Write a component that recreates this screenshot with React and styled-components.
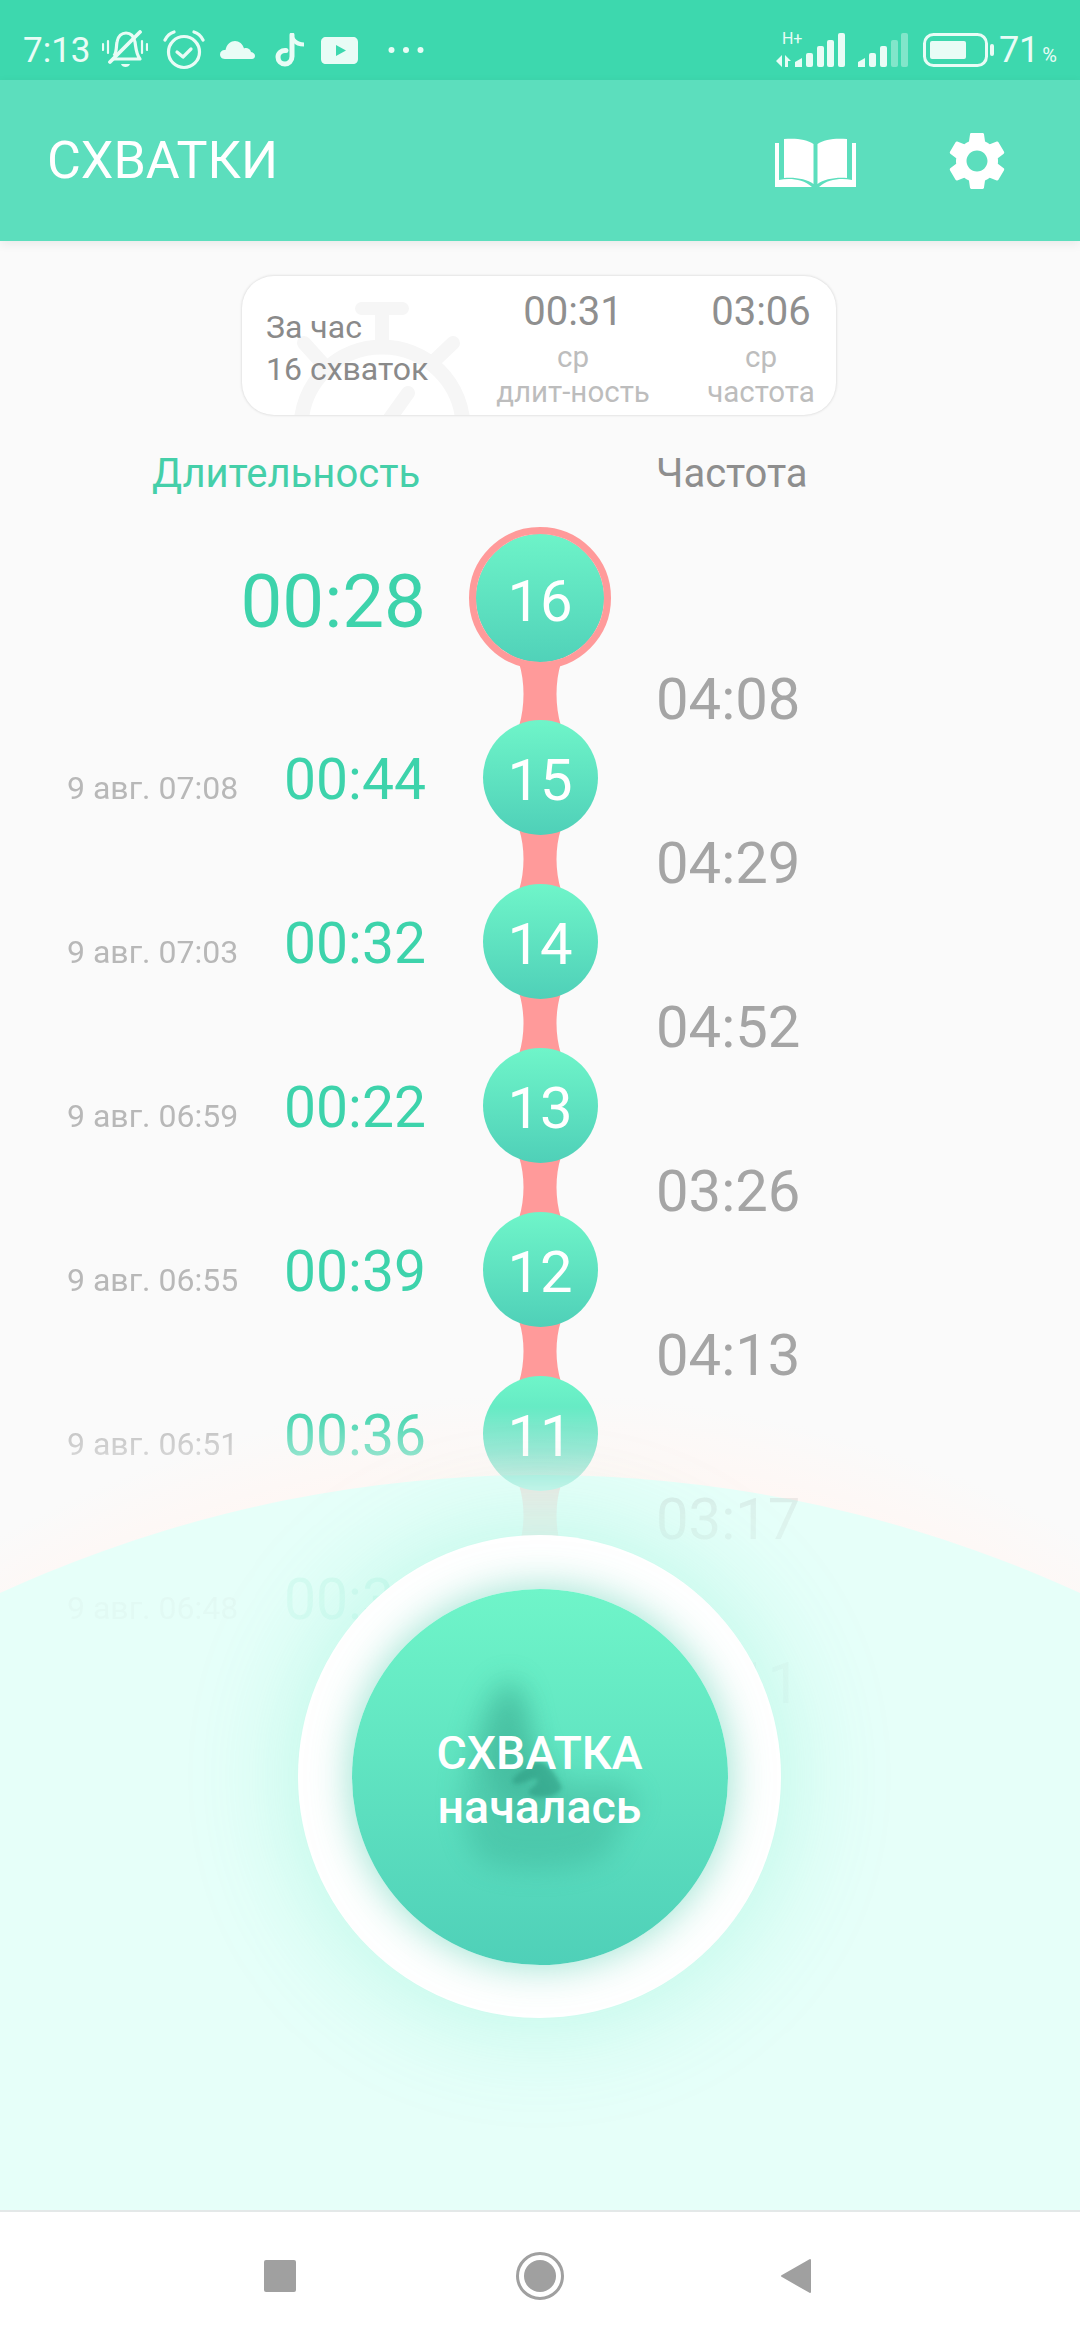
import { createGlobalStyle, styled } from "styled-components";
import { MdSettings } from "react-icons/md";

const durations = [
  { id: 16, time: "00:28" },
  { id: 15, time: "00:44", date: "9 авг. 07:08" },
  { id: 14, time: "00:32", date: "9 авг. 07:03" },
  { id: 13, time: "00:22", date: "9 авг. 06:59" },
  { id: 12, time: "00:39", date: "9 авг. 06:55" },
  { id: 11, time: "00:36", date: "9 авг. 06:51" },
  { id: 10, time: "00:35", date: "9 авг. 06:48" },
];
const frequencies = ["04:08", "04:29", "04:52", "03:26", "04:13", "03:17", "03:11"];

export default function App() {
  return (
    <Screen>
      <GlobalStyle />
      <StatusBar>
        <Clock>7:13</Clock>
        <Glyph $ml={12} width="46" height="40" viewBox="0 0 46 40">
          <path d="M12 26 C15 22 14 17 15 12 C16 6 20 3 24 3 C29 3 32 7 33 12 C34 18 34 24 38 29 H10" fill="none" stroke="currentColor" strokeWidth="3.2" strokeLinejoin="round" />
          <path d="M8 32 L38 2" stroke="currentColor" strokeWidth="3.8" strokeLinecap="round" />
          <path d="M19 34 H28 C27 38 20 38 19 34 Z" fill="currentColor" />
          <path d="M1 14 V20 M6 11 V23 M40 11 V23 M45 14 V20" stroke="currentColor" strokeWidth="2.2" strokeLinecap="round" />
        </Glyph>
        <Glyph $ml={15} width="42" height="40" viewBox="0 0 42 40">
          <circle cx="21" cy="22" r="15.5" fill="none" stroke="currentColor" strokeWidth="3.2" />
          <path d="M14 22 L20 27 L28 19" fill="none" stroke="currentColor" strokeWidth="3.2" strokeLinecap="round" strokeLinejoin="round" />
          <path d="M2 10 C4 6 7 3 11 2 M40 10 C38 6 35 3 31 2" fill="none" stroke="currentColor" strokeWidth="3.2" strokeLinecap="round" />
        </Glyph>
        <Glyph $ml={15} width="35" height="20" viewBox="0 0 35 20">
          <path d="M5 19 C1 19 0 16 0 14.5 C0 11 3 9.5 5.5 10 C6.5 4 11 1 15 1 C19 1 23 4 24 8.5 C26 7.5 30 8 31 12 C33.5 12.5 35 14 35 16 C35 18 33.5 19 32 19 Z" fill="currentColor" />
        </Glyph>
        <Glyph $ml={20} width="29" height="34" viewBox="0 0 29 34">
          <path d="M17 2 V23.5 C17 28 13.5 31 10 31 C6 31 3 28 3 24 C3 20 6.5 17 11 17.5" fill="none" stroke="currentColor" strokeWidth="5" strokeLinecap="round" />
          <path d="M18 1 C19 6 23 9 29 9.5 V13.5 C24 13.5 20 12 18 9 Z" fill="currentColor" />
        </Glyph>
        <Glyph $ml={17} width="37" height="27" viewBox="0 0 37 27">
          <path fillRule="evenodd" d="M5 0 H32 C35 0 37 2 37 5 V22 C37 25 35 27 32 27 H5 C2 27 0 25 0 22 V5 C0 2 2 0 5 0 Z M15 8 V19 L25 13.5 Z" fill="currentColor" />
        </Glyph>
        <Glyph $ml={30} width="36" height="8" viewBox="0 0 36 8">
          <circle cx="3.5" cy="4" r="3" fill="currentColor" />
          <circle cx="18" cy="4" r="3" fill="currentColor" />
          <circle cx="32.5" cy="4" r="3" fill="currentColor" />
        </Glyph>
        <StatusRight>
          <NetworkBars>
            <NetworkType>H+</NetworkType>
            <Glyph width="72" height="36" viewBox="0 0 72 36">
              <path d="M7 23 V35 L1 29 Z M10 35 V23 L16 29 H13 V35 Z" fill="currentColor" />
              <path d="M20 35 V30 L27 26 V35 Z" fill="currentColor" />
              <rect x="31" y="21" width="7" height="14" rx="2" fill="currentColor" />
              <rect x="42" y="14" width="7" height="21" rx="2" fill="currentColor" />
              <rect x="52" y="8" width="7" height="27" rx="2" fill="currentColor" />
              <rect x="63" y="1" width="7" height="34" rx="2" fill="currentColor" />
            </Glyph>
          </NetworkBars>
          <Glyph $ml={11} width="50" height="36" viewBox="0 0 50 36">
            <path d="M0 35 V30 L7 26 V35 Z" fill="currentColor" />
            <rect x="11" y="21" width="7" height="14" rx="2" fill="currentColor" />
            <rect x="22" y="14" width="7" height="21" rx="2" fill="currentColor" />
            <rect x="33" y="8" width="7" height="27" rx="2" fill="currentColor" opacity="0.4" />
            <rect x="43" y="1" width="7" height="34" rx="2" fill="currentColor" opacity="0.4" />
          </Glyph>
          <Glyph $ml={15} width="71" height="34" viewBox="0 0 71 34">
            <rect x="1.5" y="1.5" width="62" height="31" rx="9" fill="none" stroke="currentColor" strokeWidth="3" />
            <rect x="7" y="8" width="36" height="18" rx="2" fill="currentColor" />
            <rect x="67" y="11" width="4" height="12" rx="2" fill="currentColor" />
          </Glyph>
          <BatteryLevel>
            71<small>%</small>
          </BatteryLevel>
        </StatusRight>
      </StatusBar>

      <AppBar>
        <Title>СХВАТКИ</Title>
        <BookIcon width="81" height="50" viewBox="0 0 81 50">
          <path d="M0 5 H4 V42 C15 40 28 41 37 49 H0 Z" fill="#fff" />
          <path d="M81 5 H77 V42 C66 40 53 41 44 49 H81 Z" fill="#fff" />
          <path d="M9 1 C20 0 32 1 38.5 6 V46 C32 41 20 39 9 40 Z" fill="#fff" />
          <path d="M72 1 C61 0 49 1 42.5 6 V46 C49 41 61 39 72 40 Z" fill="#fff" />
        </BookIcon>
        <GearIcon />
      </AppBar>

      <Content>
        <Halo />
        <Dome />

        <SummaryCard>
          <Stopwatch width="220" height="139" viewBox="0 0 220 139">
            <rect x="87" y="26" width="54" height="13" rx="6.5" fill="#f6f6f6" />
            <rect x="107" y="36" width="14" height="30" fill="#f6f6f6" />
            <circle cx="114" cy="152" r="81" fill="none" stroke="#f6f6f6" strokeWidth="15" />
            <path d="M36 67 L54 87 M185 67 L164 87 M140 117 L120 145" stroke="#f6f6f6" strokeWidth="14" strokeLinecap="round" />
          </Stopwatch>
          <PeriodBlock>
            <div>За час</div>
            <div>16 схваток</div>
          </PeriodBlock>
          <StatBlock>
            <StatValue>00:31</StatValue>
            <StatLabel>ср</StatLabel>
            <StatLabel>длит-ность</StatLabel>
          </StatBlock>
          <StatBlock>
            <StatValue>03:06</StatValue>
            <StatLabel>ср</StatLabel>
            <StatLabel>частота</StatLabel>
          </StatBlock>
        </SummaryCard>

        <ColumnHeads>
          <ColumnHead $active>Длительность</ColumnHead>
          <ColumnHead>Частота</ColumnHead>
        </ColumnHeads>

        <Timeline>
          <DurationColumn>
            {durations.map((item, i) => (
              <DurationRow key={item.id} $first={i === 0}>
                <DurationLine $first={i === 0}>
                  {item.date && <DateLabel>{item.date}</DateLabel>}
                  <DurationValue $first={i === 0}>{item.time}</DurationValue>
                </DurationLine>
              </DurationRow>
            ))}
          </DurationColumn>

          <BeadColumn>
            {durations.map((item, i) => (
              <BeadGroup key={item.id}>
                <Bead $first={i === 0}>{item.id}</Bead>
                {i < durations.length - 1 && (
                  <Link width="44" height="61" viewBox="0 0 44 61" preserveAspectRatio="none" $first={i === 0}>
                    <path d="M1 0 C7 18 7 42 1 61 H43 C37 42 37 18 43 0 Z" fill="#ff9a9a" />
                  </Link>
                )}
              </BeadGroup>
            ))}
          </BeadColumn>

          <FrequencyColumn>
            {frequencies.map((value, i) => (
              <FrequencyValue key={i}>{value}</FrequencyValue>
            ))}
          </FrequencyColumn>
        </Timeline>

        <StartButton>
          <StartFace>
            <Silhouette width="376" height="376" viewBox="0 0 376 376">
              <defs>
                <filter id="wide" x="-40%" y="-40%" width="180%" height="180%">
                  <feGaussianBlur stdDeviation="14" />
                </filter>
                <filter id="narrow" x="-40%" y="-40%" width="180%" height="180%">
                  <feGaussianBlur stdDeviation="12" />
                </filter>
                <filter id="fine" x="-30%" y="-30%" width="160%" height="160%">
                  <feGaussianBlur stdDeviation="2" />
                </filter>
              </defs>
              <path d="M161 89 C172 95 175 110 178 139 C182 155 190 165 200 180 C215 200 230 195 255 192 C275 195 288 205 285 215 C275 235 262 240 261 262 C230 285 160 285 128 272 C112 250 108 220 112 195 C118 160 125 130 135 110 C142 95 152 88 161 89 Z" fill="#2f9c83" opacity="0.3" filter="url(#wide)" />
              <path d="M160 100 C172 105 178 140 180 160 C185 185 200 200 190 215 C170 225 140 210 135 180 C130 150 145 110 160 100 Z" fill="#2f9c83" opacity="0.28" filter="url(#narrow)" />
              <path d="M181 175 C188 170 200 176 210 199 C205 208 190 210 178 206 C172 202 188 196 185 190 C180 188 168 198 161 194 C158 188 172 180 181 175 Z" fill="#2f9c83" opacity="0.6" filter="url(#fine)" />
            </Silhouette>
            <StartLabel>
              <div>СХВАТКА</div>
              <div>началась</div>
            </StartLabel>
          </StartFace>
        </StartButton>
      </Content>

      <NavBar>
        <NavCell>
          <svg width="32" height="32" viewBox="0 0 32 32">
            <rect width="32" height="32" rx="2" fill="#a0a0a0" />
          </svg>
        </NavCell>
        <NavCell>
          <svg width="48" height="48" viewBox="0 0 48 48">
            <circle cx="24" cy="24" r="22.5" fill="none" stroke="#a0a0a0" strokeWidth="3" />
            <circle cx="24" cy="24" r="16" fill="#a0a0a0" />
          </svg>
        </NavCell>
        <NavCell>
          <svg width="38" height="36" viewBox="0 0 38 36">
            <path d="M29 2 V34 L1 18 Z" fill="#a0a0a0" stroke="#a0a0a0" strokeWidth="2" strokeLinejoin="round" />
          </svg>
        </NavCell>
      </NavBar>
    </Screen>
  );
}

const GlobalStyle = createGlobalStyle`
  html, body {
    margin: 0;
    padding: 0;
    background: #fafafa;
    font-family: Roboto, "Liberation Sans", sans-serif;
  }
`;

const Screen = styled.div`
  width: 1080px;
  height: 2340px;
  display: flex;
  flex-direction: column;
  overflow: hidden;
`;

const StatusBar = styled.div`
  height: 60px;
  padding: 20px 23px 0;
  background: #3dd8ae;
  color: #e9fcf6;
  display: flex;
  align-items: center;
`;

const Clock = styled.span`
  font-size: 35px;
  width: 67px;
`;

const Glyph = styled.svg`
  display: block;
  flex: none;
  margin-left: ${(p) => p.$ml || 0}px;
`;

const StatusRight = styled.div`
  margin-left: auto;
  display: flex;
  align-items: center;
`;

const NetworkBars = styled.div`
  position: relative;
`;

const NetworkType = styled.span`
  position: absolute;
  left: 7px;
  top: -3px;
  font-size: 16px;
  line-height: 20px;
`;

const BatteryLevel = styled.span`
  margin-left: 5px;
  font-size: 36px;
  small {
    font-size: 20px;
    margin-left: 3px;
  }
`;

const AppBar = styled.header`
  position: relative;
  z-index: 2;
  height: 161px;
  padding: 0 68px 0 47px;
  background: #5cdebd;
  box-shadow: 0 3px 10px rgba(0, 0, 0, 0.07);
  display: flex;
  align-items: center;
`;

const Title = styled.h1`
  margin: 0;
  font-size: 52px;
  font-weight: 400;
  color: #fff;
`;

const BookIcon = styled.svg`
  margin-left: auto;
  margin-top: 4px;
`;

const GearIcon = styled(MdSettings)`
  margin-left: 86px;
  width: 70px;
  height: 70px;
  color: #fff;
`;

const Content = styled.main`
  position: relative;
  flex: 1;
  overflow: hidden;
  background: #fafafa;
`;

const Halo = styled.div`
  position: absolute;
  left: -560px;
  top: 1152px;
  width: 2200px;
  height: 2200px;
  border-radius: 50%;
  background: radial-gradient(circle closest-side, #fff7f4 0, #fff7f4 92%, rgba(255, 247, 244, 0) 100%);
`;

const Dome = styled.div`
  position: absolute;
  left: -754px;
  top: 1234px;
  width: 2588px;
  height: 2588px;
  border-radius: 50%;
  background: #e6fff9;
`;

const SummaryCard = styled.section`
  position: relative;
  margin: 35px 0 0 242px;
  width: 594px;
  height: 139px;
  box-sizing: border-box;
  border-radius: 32px;
  background: #fff;
  box-shadow: 0 0 3px rgba(0, 0, 0, 0.18);
  overflow: hidden;
  display: grid;
  grid-template-columns: 218px 226px 150px;
`;

const Stopwatch = styled.svg`
  position: absolute;
  left: 26px;
  top: 0;
`;

const PeriodBlock = styled.div`
  position: relative;
  padding: 30px 0 0 24px;
  font-size: 32px;
  line-height: 42px;
  white-space: nowrap;
  color: #8a8a8a;
`;

const StatBlock = styled.div`
  position: relative;
  padding-top: 14px;
  text-align: center;
`;

const StatValue = styled.div`
  font-size: 40px;
  line-height: 44px;
  margin-bottom: 6px;
  color: #8f8f8f;
`;

const StatLabel = styled.div`
  font-size: 29.5px;
  line-height: 35px;
  color: #bdbdbd;
`;

const ColumnHeads = styled.div`
  position: relative;
  margin-top: 36px;
  padding-left: 152px;
  display: grid;
  grid-template-columns: 504px 1fr;
  font-size: 40px;
  line-height: 46px;
`;

const ColumnHead = styled.div`
  color: ${(p) => (p.$active ? "#45cfa9" : "#8e8e8e")};
`;

const Timeline = styled.div`
  position: relative;
  margin-top: 30px;
  display: flex;
  -webkit-mask-image: linear-gradient(
    to bottom,
    #000 880px,
    rgba(0, 0, 0, 0.55) 930px,
    rgba(0, 0, 0, 0.2) 964px,
    rgba(0, 0, 0, 0.12) 994px,
    rgba(0, 0, 0, 0.07) 1084px,
    rgba(0, 0, 0, 0.05) 1180px
  );
  mask-image: linear-gradient(
    to bottom,
    #000 880px,
    rgba(0, 0, 0, 0.55) 930px,
    rgba(0, 0, 0, 0.2) 964px,
    rgba(0, 0, 0, 0.12) 994px,
    rgba(0, 0, 0, 0.07) 1084px,
    rgba(0, 0, 0, 0.05) 1180px
  );
`;

const DurationColumn = styled.div`
  width: 469px;
  flex: none;
`;

const DurationRow = styled.div`
  box-sizing: border-box;
  height: ${(p) => (p.$first ? 142 : 115)}px;
  margin-bottom: ${(p) => (p.$first ? 51 : 49)}px;
  padding: ${(p) => (p.$first ? 8 : 5)}px 43px 0 67px;
  display: flex;
  align-items: center;
`;

const DurationLine = styled.div`
  flex: 1;
  display: flex;
  align-items: baseline;
  justify-content: ${(p) => (p.$first ? "flex-end" : "space-between")};
`;

const DateLabel = styled.span`
  font-size: 32px;
  color: #b8b8b8;
`;

const DurationValue = styled.span`
  font-size: ${(p) => (p.$first ? 74.5 : 57)}px;
  line-height: 1.1;
  color: #3dd3ab;
`;

const BeadColumn = styled.div`
  width: 142px;
  flex: none;
  display: flex;
  flex-direction: column;
  align-items: center;
`;

const BeadGroup = styled.div`
  display: flex;
  flex-direction: column;
  align-items: center;
`;

const Bead = styled.div`
  position: relative;
  z-index: 1;
  box-sizing: border-box;
  width: ${(p) => (p.$first ? 142 : 115)}px;
  height: ${(p) => (p.$first ? 142 : 115)}px;
  padding-top: 5px;
  border-radius: 50%;
  ${(p) => p.$first && "border: 7px solid #ff9a9a;"}
  background: linear-gradient(180deg, #6ff5c9, #4fd0b8);
  background-origin: border-box;
  ${(p) => p.$first && "background-clip: padding-box; background-color: #ff9a9a;"}
  color: #fff;
  font-size: 58px;
  display: flex;
  align-items: center;
  justify-content: center;
`;

const Link = styled.svg`
  display: block;
  flex: none;
  height: ${(p) => (p.$first ? 63 : 61)}px;
  margin: -6px 0;
`;

const FrequencyColumn = styled.div`
  padding: 90px 0 0 45px;
`;

const FrequencyValue = styled.div`
  height: 164px;
  line-height: 164px;
  font-size: 58px;
  color: #a5a5a5;
`;

const StartButton = styled.div`
  position: absolute;
  left: 298px;
  top: 1294px;
  width: 483px;
  height: 483px;
  border-radius: 50%;
  background: #fff;
  box-shadow: 0 0 110px rgba(70, 225, 185, 0.28);
  display: flex;
  align-items: center;
  justify-content: center;
`;

const StartFace = styled.div`
  position: relative;
  width: 376px;
  height: 376px;
  border-radius: 50%;
  background: linear-gradient(180deg, #6ff5c9, #4fd0b8);
  box-shadow: 0 0 42px rgba(60, 200, 165, 0.55);
  display: flex;
  align-items: center;
  justify-content: center;
`;

const Silhouette = styled.svg`
  position: absolute;
  left: 0;
  top: 0;
`;

const StartLabel = styled.div`
  position: relative;
  padding-top: 6px;
  font-size: 46.5px;
  font-weight: 500;
  line-height: 54px;
  text-align: center;
  color: #fff;
`;

const NavBar = styled.nav`
  position: relative;
  height: 128px;
  border-top: 2px solid #e3e8e8;
  background: #fff;
  display: grid;
  grid-template-columns: repeat(3, 260px);
  justify-content: center;
  align-items: center;
`;

const NavCell = styled.div`
  display: flex;
  justify-content: center;
  svg {
    display: block;
  }
`;
